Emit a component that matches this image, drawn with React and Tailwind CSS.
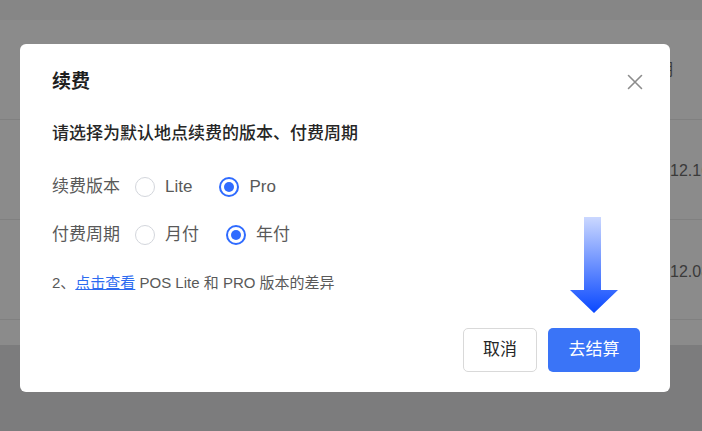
import React, { useState } from 'react';

const Radio = ({ checked }) => (
  <span
    className={
      checked
        ? 'mr-[10px] flex h-[20px] w-[20px] items-center justify-center rounded-full border-2 border-[#2f6bff] bg-white'
        : 'mr-[10px] flex h-[20px] w-[20px] items-center justify-center rounded-full border-[1.5px] border-[#d3d6dc] bg-white'
    }
  >
    {checked && <span className="h-[10px] w-[10px] rounded-full bg-[#2f6bff]" />}
  </span>
);

const OptionRow = ({ label, options, value, onChange, className }) => (
  <div className={`flex h-[24px] items-center text-[17px] leading-[24px] text-[#595959] ${className}`}>
    <span className="mr-[15px]">{label}</span>
    <div className="flex items-center gap-[27px]">
      {options.map((opt) => (
        <button
          key={opt}
          type="button"
          onClick={() => onChange(opt)}
          className="flex items-center"
        >
          <Radio checked={value === opt} />
          <span>{opt}</span>
        </button>
      ))}
    </div>
  </div>
);

const App = () => {
  const [version, setVersion] = useState('Pro');
  const [period, setPeriod] = useState('年付');

  return (
    <div className="relative h-[431px] w-[702px] overflow-hidden bg-[#7c7c7d] font-['Liberation_Sans','Noto_Sans_CJK_SC',sans-serif]">
      {/* page under the mask */}
      <div className="h-[20px] bg-[#868686]" />
      <div className="flex h-[100px] items-center justify-end border-b border-[#808080] bg-[#8b8b8b] pr-[29px] text-[16px] text-[#3a3a3a]">
        到期
      </div>
      <div className="flex h-[100px] items-center whitespace-nowrap border-b border-[#808080] bg-[#8b8b8b] pl-[630px] pt-[2px] text-[16px] text-[#3a3a3a]">
        2023.12.16 10:00
      </div>
      <div className="flex h-[100px] items-center whitespace-nowrap border-b border-[#808080] bg-[#8b8b8b] pl-[630px] pt-[4px] text-[16px] text-[#3a3a3a]">
        2023.12.08 10:00
      </div>
      <div className="h-[25px] bg-[#8b8b8b]" />

      {/* dialog */}
      <div className="absolute left-[20px] top-[44px] flex h-[348px] w-[650px] flex-col rounded-[6px] bg-white px-[32px] pt-[26px]">
        <div className="flex h-[24px] items-center justify-between">
          <h2 className="text-[19px] font-semibold leading-[24px] text-[#1f1f1f]">续费</h2>
          <button type="button" className="mr-[-5px] text-[#8c8c8c]">
            <svg width="16" height="16" viewBox="0 0 16 16" fill="none" stroke="currentColor" strokeWidth="1.6" strokeLinecap="round">
              <path d="M1.5 1.5 14.5 14.5M14.5 1.5 1.5 14.5" />
            </svg>
          </button>
        </div>

        <p className="mt-[29px] text-[17px] font-medium leading-[22px] text-[#262626]">
          请选择为默认地点续费的版本、付费周期
        </p>

        <OptionRow
          className="mt-[30px]"
          label="续费版本"
          options={['Lite', 'Pro']}
          value={version}
          onChange={setVersion}
        />
        <OptionRow
          className="mt-[24px]"
          label="付费周期"
          options={['月付', '年付']}
          value={period}
          onChange={setPeriod}
        />

        <p className="mt-[26px] text-[15px] leading-[20px] text-[#595959]">
          2、<a href="#" className="text-[#2d6bf0] underline">点击查看</a> POS Lite 和 PRO 版本的差异
        </p>

        <div className="mr-[-2px] mt-[35px] flex justify-end gap-[11px]">
          <button
            type="button"
            className="h-[44px] w-[74px] rounded-[5px] border border-[#d9d9d9] bg-white text-[17px] text-[#262626]"
          >
            取消
          </button>
          <button
            type="button"
            className="h-[44px] w-[92px] rounded-[5px] bg-[#3a74f7] text-[17px] text-white"
          >
            去结算
          </button>
        </div>

        {/* hint arrow */}
        <svg className="absolute left-[550px] top-[173px]" width="48" height="96" viewBox="0 0 48 96">
          <defs>
            <linearGradient id="arrowFill" x1="0" y1="0" x2="0" y2="1">
              <stop offset="0" stopColor="#cbd8ff" />
              <stop offset="1" stopColor="#0948ff" />
            </linearGradient>
          </defs>
          <path d="M14 0H31V73H48L24 96L0 73H14Z" fill="url(#arrowFill)" />
        </svg>
      </div>
    </div>
  );
};

export default App;
